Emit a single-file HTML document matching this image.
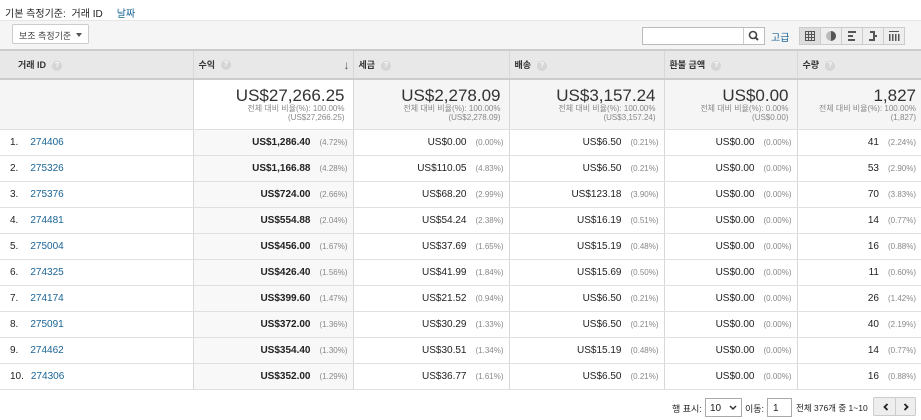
<!DOCTYPE html>
<html><head><meta charset="utf-8"><style>
*{box-sizing:border-box;margin:0;padding:0}
body{width:921px;height:420px;overflow:hidden;background:#fff;font-family:"Liberation Sans","Noto Sans CJK KR",sans-serif;font-size:11px;color:#222;position:relative}
.top{position:absolute;left:0;top:0;height:20px;width:921px;font-size:10px;padding:5px 0 0 5px}
.top b{font-weight:normal;color:#222;margin-left:3px}
.top a{color:#1a6496;margin-left:14px}
.bar{position:absolute;left:0;top:20px;width:921px;height:29px;background:#f5f5f5;border-top:1px solid #e5e5e5}
.sel{position:absolute;left:12px;top:3px;width:77px;height:20px;background:#fff;border:1px solid #ccc;border-radius:2px;font-size:9px;color:#444;padding:4px 0 0 6px}
.sel:after{content:"";position:absolute;right:6px;top:8px;border:3px solid transparent;border-top:4px solid #555}
.search{position:absolute;left:642px;top:6px;width:123px;height:18px;background:#fff;border:1px solid #bbb}
.search i{position:absolute;right:0;top:0;width:21px;height:16px;border-left:1px solid #ccc}
.adv{position:absolute;left:771px;top:8px;color:#1a6496;font-size:10px}
.views{position:absolute;left:799px;top:6px;width:106px;height:18px;border:1px solid #ccc;background:#eee;display:flex}
.views span{flex:1;border-left:1px solid #ccc;text-align:center;line-height:0}
.views span:first-child{border-left:none;background:#ddd}
table{position:absolute;left:0;top:49px;border-collapse:collapse;table-layout:fixed;width:921px}
td,th{border-left:1px solid #d8d8d8;border-bottom:1px solid #e0e0e0;padding:0}
tr td:first-child,tr th:first-child{border-left:none}
th{height:29px;background:#e8e8e8;font-size:9px;text-align:left;padding-left:5px;font-weight:bold;color:#333;border-top:2px solid #ccc;border-bottom:2px solid #ccc}
th:first-child{padding-left:18px}
.q{display:inline-block;width:10px;height:10px;border-radius:50%;background:#d5d5d5;color:#fff;font-size:7px;text-align:center;line-height:10px;margin-left:6px;vertical-align:middle}
.tot td{height:50px;background:#f5f5f5;text-align:right;padding-right:8px;vertical-align:top;padding-top:7px}
.tot td.w{background:#fff}
.big{font-size:17px;color:#333;line-height:17px}
.sm{font-size:8px;color:#888;line-height:9px}
.d td{height:26.1px;text-align:right;font-size:10px;padding-right:5px}
.d td.r{background:#f8f8f8;font-weight:bold}
.d td:first-child{text-align:left;padding-left:10px}
.d td:first-child a{color:#1a6496;margin-left:12px}
.p{display:inline-block;margin-left:9px;font-size:8px;color:#888;font-weight:normal}
.pg{position:absolute;top:397px;left:0;width:921px;height:20px;font-size:9px}
.pg *{position:absolute}
</style></head><body>
<div class="top">기본 측정기준: <b>거래 ID</b><a>날짜</a></div>
<div class="bar">
<div class="sel">보조 측정기준</div>
<div class="search"><i><svg width="20" height="16"><circle cx="9" cy="7" r="3.5" fill="none" stroke="#444" stroke-width="1.6"/><line x1="11.5" y1="9.5" x2="14" y2="12" stroke="#444" stroke-width="2"/></svg></i></div>
<div class="adv">고급</div>
<div class="views">
<span><svg width="20" height="16"><g fill="none" stroke="#555"><rect x="5.5" y="3.5" width="9" height="9"/><line x1="8.5" y1="3.5" x2="8.5" y2="12.5"/><line x1="11.5" y1="3.5" x2="11.5" y2="12.5"/><line x1="5.5" y1="6.5" x2="14.5" y2="6.5"/><line x1="5.5" y1="9.5" x2="14.5" y2="9.5"/></g></svg></span>
<span><svg width="20" height="16"><circle cx="10" cy="8" r="5" fill="#bbb"/><path d="M10 3a5 5 0 0 1 0 10z" fill="#555"/></svg></span>
<span><svg width="20" height="16" fill="#555"><rect x="6" y="3" width="8" height="2"/><rect x="6" y="7" width="5" height="2"/><rect x="6" y="11" width="7" height="2"/></svg></span>
<span><svg width="20" height="16" fill="#555"><rect x="7" y="3" width="5" height="2"/><rect x="10" y="3" width="2" height="10"/><rect x="10" y="7" width="4" height="2"/><rect x="6" y="11" width="4" height="2"/></svg></span>
<span><svg width="20" height="16" fill="#555"><rect x="5" y="3" width="10" height="1"/><rect x="5" y="6" width="1.5" height="7"/><rect x="8" y="6" width="1.5" height="7"/><rect x="11" y="6" width="1.5" height="7"/><rect x="14" y="6" width="1.5" height="7"/></svg></span>
</div>
</div>
<table>
<colgroup><col style="width:193px"><col style="width:160px"><col style="width:156px"><col style="width:155px"><col style="width:133px"><col style="width:124px"></colgroup>
<tr><th>거래 ID<span class="q">?</span></th><th>수익<span class="q">?</span><span style="float:right;margin-right:3px;font-size:12px;color:#555">↓</span></th><th>세금<span class="q">?</span></th><th>배송<span class="q">?</span></th><th>환불 금액<span class="q">?</span></th><th>수량<span class="q">?</span></th></tr>
<tr class="tot"><td></td>
<td class="w"><div class="big">US$27,266.25</div><div class="sm">전체 대비 비율(%): 100.00%<br>(US$27,266.25)</div></td>
<td><div class="big">US$2,278.09</div><div class="sm">전체 대비 비율(%): 100.00%<br>(US$2,278.09)</div></td>
<td><div class="big">US$3,157.24</div><div class="sm">전체 대비 비율(%): 100.00%<br>(US$3,157.24)</div></td>
<td><div class="big">US$0.00</div><div class="sm">전체 대비 비율(%): 0.00%<br>(US$0.00)</div></td>
<td style="padding-right:5px"><div class="big">1,827</div><div class="sm">전체 대비 비율(%): 100.00%<br>(1,827)</div></td></tr>
<tr class="d"><td>1.<a>274406</a></td><td class="r">US$1,286.40<span class="p">(4.72%)</span></td><td>US$0.00<span class="p">(0.00%)</span></td><td>US$6.50<span class="p">(0.21%)</span></td><td>US$0.00<span class="p">(0.00%)</span></td><td>41<span class="p">(2.24%)</span></td></tr>
<tr class="d"><td>2.<a>275326</a></td><td class="r">US$1,166.88<span class="p">(4.28%)</span></td><td>US$110.05<span class="p">(4.83%)</span></td><td>US$6.50<span class="p">(0.21%)</span></td><td>US$0.00<span class="p">(0.00%)</span></td><td>53<span class="p">(2.90%)</span></td></tr>
<tr class="d"><td>3.<a>275376</a></td><td class="r">US$724.00<span class="p">(2.66%)</span></td><td>US$68.20<span class="p">(2.99%)</span></td><td>US$123.18<span class="p">(3.90%)</span></td><td>US$0.00<span class="p">(0.00%)</span></td><td>70<span class="p">(3.83%)</span></td></tr>
<tr class="d"><td>4.<a>274481</a></td><td class="r">US$554.88<span class="p">(2.04%)</span></td><td>US$54.24<span class="p">(2.38%)</span></td><td>US$16.19<span class="p">(0.51%)</span></td><td>US$0.00<span class="p">(0.00%)</span></td><td>14<span class="p">(0.77%)</span></td></tr>
<tr class="d"><td>5.<a>275004</a></td><td class="r">US$456.00<span class="p">(1.67%)</span></td><td>US$37.69<span class="p">(1.65%)</span></td><td>US$15.19<span class="p">(0.48%)</span></td><td>US$0.00<span class="p">(0.00%)</span></td><td>16<span class="p">(0.88%)</span></td></tr>
<tr class="d"><td>6.<a>274325</a></td><td class="r">US$426.40<span class="p">(1.56%)</span></td><td>US$41.99<span class="p">(1.84%)</span></td><td>US$15.69<span class="p">(0.50%)</span></td><td>US$0.00<span class="p">(0.00%)</span></td><td>11<span class="p">(0.60%)</span></td></tr>
<tr class="d"><td>7.<a>274174</a></td><td class="r">US$399.60<span class="p">(1.47%)</span></td><td>US$21.52<span class="p">(0.94%)</span></td><td>US$6.50<span class="p">(0.21%)</span></td><td>US$0.00<span class="p">(0.00%)</span></td><td>26<span class="p">(1.42%)</span></td></tr>
<tr class="d"><td>8.<a>275091</a></td><td class="r">US$372.00<span class="p">(1.36%)</span></td><td>US$30.29<span class="p">(1.33%)</span></td><td>US$6.50<span class="p">(0.21%)</span></td><td>US$0.00<span class="p">(0.00%)</span></td><td>40<span class="p">(2.19%)</span></td></tr>
<tr class="d"><td>9.<a>274462</a></td><td class="r">US$354.40<span class="p">(1.30%)</span></td><td>US$30.51<span class="p">(1.34%)</span></td><td>US$15.19<span class="p">(0.48%)</span></td><td>US$0.00<span class="p">(0.00%)</span></td><td>14<span class="p">(0.77%)</span></td></tr>
<tr class="d"><td>10.<a style="margin-left:7px">274306</a></td><td class="r">US$352.00<span class="p">(1.29%)</span></td><td>US$36.77<span class="p">(1.61%)</span></td><td>US$6.50<span class="p">(0.21%)</span></td><td>US$0.00<span class="p">(0.00%)</span></td><td>16<span class="p">(0.88%)</span></td></tr>
</table>
<div class="pg">
<span style="left:672px;top:5px">행 표시:</span>
<div style="left:705px;top:1px;width:37px;height:19px;border:1px solid #aaa;background:#fff;padding:4px 0 0 4px;font-size:10px">10<svg style="left:23px;top:6px" width="8" height="6"><path d="M1 1l3 3 3-3" fill="none" stroke="#333" stroke-width="1.5"/></svg></div>
<span style="left:745px;top:5px">이동:</span>
<div style="left:767px;top:1px;width:25px;height:19px;border:1px solid #aaa;background:#fff;padding:4px 0 0 5px;font-size:10px">1</div>
<span style="left:796px;top:5px;font-size:8.5px">전체 376개 중 1~10</span>
<div style="left:873px;top:0;width:43px;height:19px;border:1px solid #ccc;background:#eee;border-radius:2px"><svg style="left:9px;top:5px" width="6" height="8"><path d="M4.5 1L1.5 4l3 3" fill="none" stroke="#222" stroke-width="1.8"/></svg><span style="left:21px;top:0;width:1px;height:17px;background:#ccc"></span><svg style="left:29px;top:5px" width="6" height="8"><path d="M1.5 1l3 3-3 3" fill="none" stroke="#222" stroke-width="1.8"/></svg></div>
</div>
</body></html>
